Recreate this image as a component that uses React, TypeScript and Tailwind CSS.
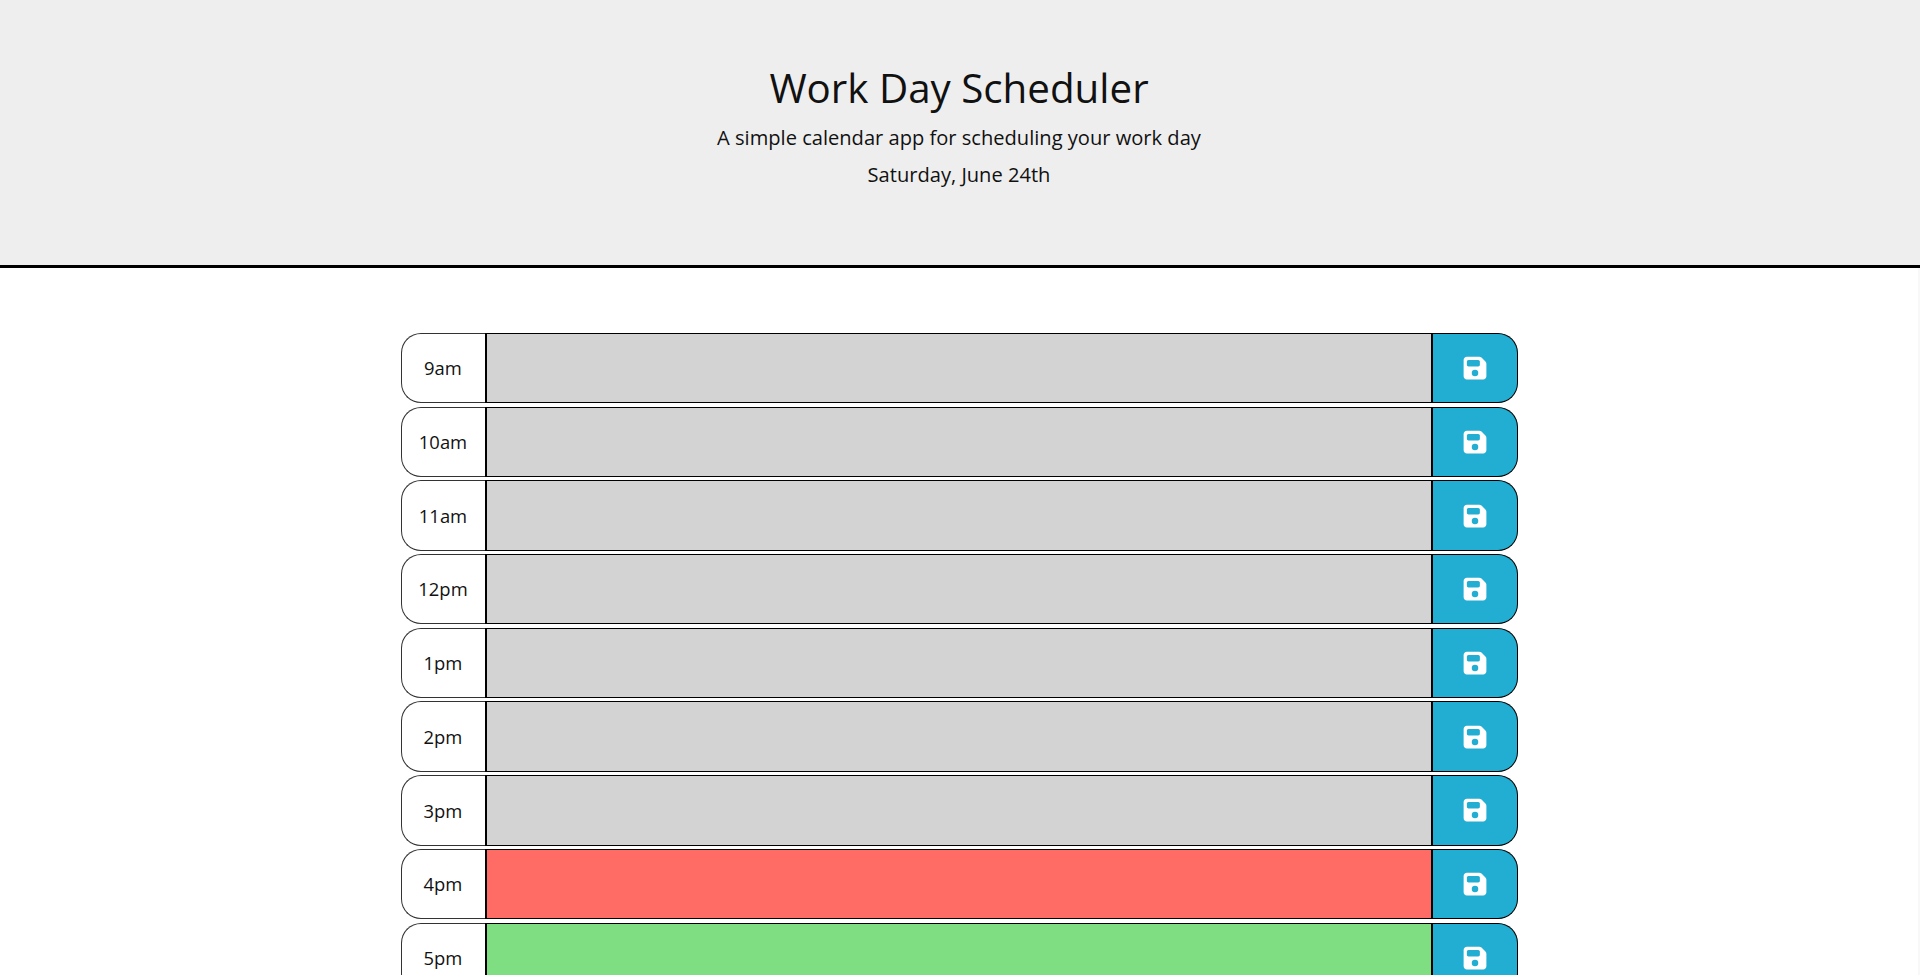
import { FaFloppyDisk } from "react-icons/fa6";

const hours = [
  { label: "9am", color: "bg-[#d3d3d3]" },
  { label: "10am", color: "bg-[#d3d3d3]" },
  { label: "11am", color: "bg-[#d3d3d3]" },
  { label: "12pm", color: "bg-[#d3d3d3]" },
  { label: "1pm", color: "bg-[#d3d3d3]" },
  { label: "2pm", color: "bg-[#d3d3d3]" },
  { label: "3pm", color: "bg-[#d3d3d3]" },
  { label: "4pm", color: "bg-[#ff6b65]" },
  { label: "5pm", color: "bg-[#7fde81]" },
];

export default function App() {
  return (
    <div className="flex h-[975px] flex-col overflow-hidden bg-white font-['Open_Sans',sans-serif] text-[#111]">
      <header className="h-[268px] shrink-0 border-b-[3px] border-black bg-[#eeeeee] pt-[59px] pr-[2px] text-center">
        <h1 className="text-[40.3px] leading-[58px] font-normal">Work Day Scheduler</h1>
        <p className="mt-[6px] text-[20.1px] leading-[30px]">A simple calendar app for scheduling your work day</p>
        <p className="mt-[7px] text-[20.1px] leading-[30px]">Saturday, June 24th</p>
      </header>

      <div className="flex min-h-0 flex-1">
        <main className="mt-[65px] flex min-w-0 flex-1 flex-col items-center gap-[3.3px]">
          {hours.map((hour) => (
            <div key={hour.label} className="flex h-[70.4px] w-[1117px] shrink-0">
              <div className="flex w-[84px] items-center justify-center rounded-l-[20px] border border-r-0 border-[#333] bg-white text-[18.4px]">
                {hour.label}
              </div>
              <div className={`flex-1 border-x-2 border-y border-black ${hour.color}`} />
              <button className="flex w-[85px] items-center justify-center rounded-r-[20px] border border-l-0 border-black bg-[#22aed2] text-white">
                <FaFloppyDisk className="h-[26px] w-[26px]" />
              </button>
            </div>
          ))}
        </main>
        <div className="w-[2px] shrink-0 bg-[#f8f8f8]" />
      </div>
    </div>
  );
}
